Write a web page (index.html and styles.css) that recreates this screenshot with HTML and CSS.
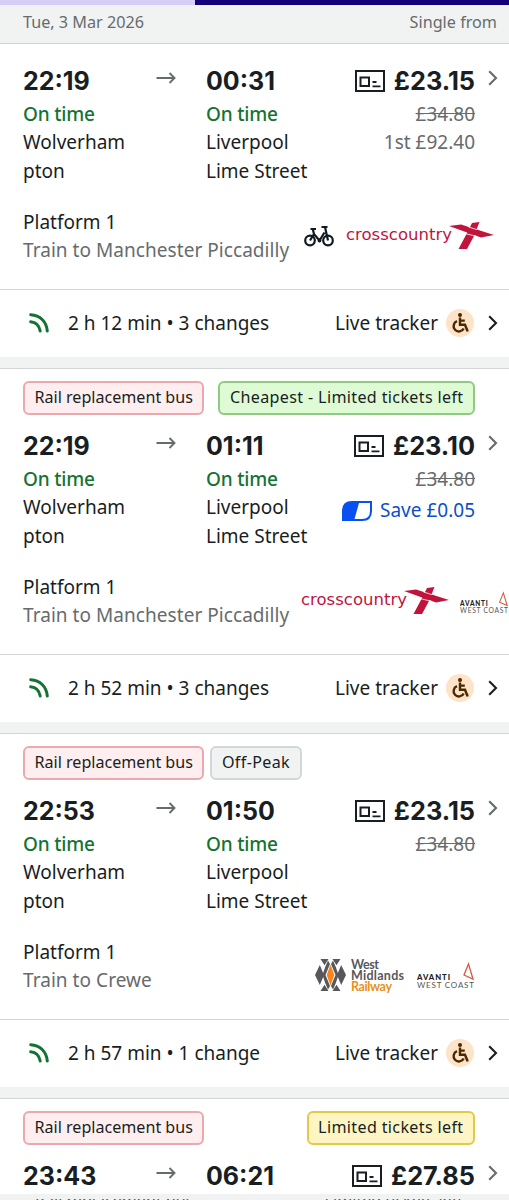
FILE: index.html
```html
<!DOCTYPE html>
<html lang="en">
<head>
  <meta charset="UTF-8">
  <meta name="viewport" content="width=device-width, initial-scale=1.0">
  <title>Train times</title>
  <link rel="stylesheet" href="styles.css">
</head>
<body>
  <!-- Shared icons and operator logos -->
  <svg class="sprite" width="0" height="0">
    <symbol id="arrow" viewBox="0 0 20 12">
      <path d="M.5 6h18M13.500 1l5 5-5 5" fill="none" stroke="currentColor" stroke-width="1.900"/>
    </symbol>
    <symbol id="chevron" viewBox="0 0 10 16">
      <path d="M1.200 1.200L8 8l-6.800 6.800" fill="none" stroke="currentColor" stroke-width="2.100"/>
    </symbol>
    <symbol id="ticket" viewBox="0 0 30 22">
      <path d="M1 1h28v20H1zM5.500 7.500h8.500v8.500H5.500z" fill="none" stroke="currentColor" stroke-width="2"/>
      <path d="M17.500 12h4M17.500 16.300h8" fill="none" stroke="currentColor" stroke-width="1.800"/>
    </symbol>
    <symbol id="live" viewBox="0 0 20 20">
      <path d="M1.700 1.700c9.300.5 15.800 7 16.600 16.300M1.700 8.800c5.300.5 8.500 3.700 9.500 9.200" fill="none" stroke="currentColor" stroke-width="3" stroke-linecap="round"/>
    </symbol>
    <symbol id="wheelchair" viewBox="0 0 28 28">
      <circle cx="14" cy="14" r="14" fill="#fde3c8"/>
      <circle cx="14" cy="6" r="2" fill="#4a2800"/>
      <path d="M14 8.500v7.300h5l2.200 5.500 1.200-.3M14 11.600h4.800M11 12.200a5.300 5.300 0 1 0 6.700 7.200" fill="none" stroke="#4a2800" stroke-width="2.400"/>
    </symbol>
    <symbol id="bike" viewBox="0 0 30 22">
      <g fill="none" stroke="#101820" stroke-width="2.200">
        <circle cx="6" cy="15.500" r="4.800"/>
        <circle cx="24" cy="15.500" r="4.800"/>
        <path d="M6 15.500l4-6.500 5.500 6.500 5-8M10 9L8.800 4.200M6.500 4h5.500M24 15.500L21 2h-3.500M21 2h2.500"/>
      </g>
      <circle cx="15.500" cy="15.500" r="1.900" fill="#101820"/>
    </symbol>
    <symbol id="crosscountry" viewBox="0 0 148 28">
      <text x="0" y="18" font-family="DejaVu Sans" font-size="16.500" textLength="106" lengthAdjust="spacingAndGlyphs" fill="#c0143c">crosscountry</text>
      <path d="M103 4l12-1.500 33 10.500-13 2.500z" fill="#c0143c"/>
      <path d="M126 1l7.500-1-6 15-6.500 12h-8.500l8-15z" fill="#c0143c"/>
      <path d="M122.500 5l8.500 2.600M118 11.300l12.500 3" stroke="#fff" stroke-width=".8"/>
    </symbol>
    <symbol id="wmr" viewBox="0 0 90 35">
      <path d="M5.500 0h8L9.500 6.300zM17.500 0h8l-4 6.300zM5.500 32h8l-4-6.300zM17.500 32h8l-4-6.300zM4.800 6L9 16 4.800 26 0 16zM26.200 6L31 16l-4.800 10L22 16z" fill="#57585c"/>
      <path d="M10.200 8L13 1.500l2 3.500-4.500 11L15 27l-2 3.500L10.200 24 7.500 16zM20.800 8L18 1.500 16 5l4.500 11L16 27l2 3.500 2.800-6.500 2.700-8z" fill="#57585c"/>
      <path d="M15.500 5.500l3.800 10.500-3.800 10.500-3.800-10.500z" fill="#f7851b"/>
      <g font-family="Lato" font-size="12.500" font-weight="700">
        <text x="36" y="9.500" textLength="28" fill="#57585c">West</text>
        <text x="36" y="21" textLength="53" fill="#57585c">Midlands</text>
        <text x="36" y="32" textLength="41" fill="#e8921c">Railway</text>
      </g>
    </symbol>
    <symbol id="avanti" viewBox="0 0 57 28">
      <path d="M51.500 2l-4.500 11 9 4z" fill="none" stroke="#d65a41" stroke-width="1.300"/>
      <text x="0" y="18" font-family="Lato" font-size="7.700" font-weight="900" textLength="33" fill="#222">AVANTI</text>
      <text x="0" y="26.300" font-family="Lato" font-size="8" textLength="57" fill="#555">WEST COAST</text>
    </symbol>
    <symbol id="saver" viewBox="0 0 30 20">
      <path d="M10 0h20v10q0 10-10 10H0V10Q0 0 10 0z" fill="#0850f0"/>
      <path d="M17 2H28v8q0 8-8 8h-7.500z" fill="#fff"/>
    </symbol>
  </svg>

  <div class="page">
    <div class="progress"><div class="progress-done"></div></div>
    <header class="date-bar">
      <span>Tue, 3 Mar 2026</span>
      <span>Single from</span>
    </header>

    <main>
      <section class="journey untagged">
        <div class="summary">
          <div class="stop">
            <div class="time">22:19</div>
            <div class="status">On time</div>
            <div>Wolverham<br>pton</div>
          </div>
          <svg class="arrow"><use href="#arrow"/></svg>
          <div class="stop">
            <div class="time">00:31</div>
            <div class="status">On time</div>
            <div>Liverpool<br>Lime Street</div>
          </div>
          <div class="fare">
            <div class="price"><svg class="ticket"><use href="#ticket"/></svg>£23.15</div>
            <div class="was">£34.80</div>
            <div class="first-class">1st £92.40</div>
          </div>
          <svg class="chevron"><use href="#chevron"/></svg>
        </div>
        <div class="service">
          <div>
            <div>Platform 1</div>
            <div class="train">Train to Manchester Piccadilly</div>
          </div>
          <div class="operators">
            <svg class="bike"><use href="#bike"/></svg>
            <svg class="crosscountry"><use href="#crosscountry"/></svg>
          </div>
        </div>
        <div class="tracker">
          <svg class="live"><use href="#live"/></svg>
          <span>2 h 12 min • 3 changes</span>
          <span class="track-link">Live tracker</span>
          <svg class="wheelchair"><use href="#wheelchair"/></svg>
          <svg class="chevron"><use href="#chevron"/></svg>
        </div>
      </section>

      <section class="journey">
        <div class="tags">
          <span class="tag tag-red">Rail replacement bus</span>
          <span class="tag tag-green tag-right">Cheapest - Limited tickets left</span>
        </div>
        <div class="summary">
          <div class="stop">
            <div class="time">22:19</div>
            <div class="status">On time</div>
            <div>Wolverham<br>pton</div>
          </div>
          <svg class="arrow"><use href="#arrow"/></svg>
          <div class="stop">
            <div class="time">01:11</div>
            <div class="status">On time</div>
            <div>Liverpool<br>Lime Street</div>
          </div>
          <div class="fare">
            <div class="price"><svg class="ticket"><use href="#ticket"/></svg>£23.10</div>
            <div class="was">£34.80</div>
            <div class="saving"><svg class="saver"><use href="#saver"/></svg>Save £0.05</div>
          </div>
          <svg class="chevron"><use href="#chevron"/></svg>
        </div>
        <div class="service">
          <div>
            <div>Platform 1</div>
            <div class="train">Train to Manchester Piccadilly</div>
          </div>
          <div class="operators">
            <svg class="crosscountry"><use href="#crosscountry"/></svg>
            <svg class="avanti avanti-small" viewBox="0 0 57 28"><use href="#avanti" width="57" height="28"/></svg>
          </div>
        </div>
        <div class="tracker">
          <svg class="live"><use href="#live"/></svg>
          <span>2 h 52 min • 3 changes</span>
          <span class="track-link">Live tracker</span>
          <svg class="wheelchair"><use href="#wheelchair"/></svg>
          <svg class="chevron"><use href="#chevron"/></svg>
        </div>
      </section>

      <section class="journey">
        <div class="tags">
          <span class="tag tag-red">Rail replacement bus</span>
          <span class="tag tag-grey">Off-Peak</span>
        </div>
        <div class="summary">
          <div class="stop">
            <div class="time">22:53</div>
            <div class="status">On time</div>
            <div>Wolverham<br>pton</div>
          </div>
          <svg class="arrow"><use href="#arrow"/></svg>
          <div class="stop">
            <div class="time">01:50</div>
            <div class="status">On time</div>
            <div>Liverpool<br>Lime Street</div>
          </div>
          <div class="fare">
            <div class="price"><svg class="ticket"><use href="#ticket"/></svg>£23.15</div>
            <div class="was">£34.80</div>
          </div>
          <svg class="chevron"><use href="#chevron"/></svg>
        </div>
        <div class="service">
          <div>
            <div>Platform 1</div>
            <div class="train">Train to Crewe</div>
          </div>
          <div class="operators operators-right">
            <svg class="wmr"><use href="#wmr"/></svg>
            <svg class="avanti"><use href="#avanti"/></svg>
          </div>
        </div>
        <div class="tracker">
          <svg class="live"><use href="#live"/></svg>
          <span>2 h 57 min • 1 change</span>
          <span class="track-link">Live tracker</span>
          <svg class="wheelchair"><use href="#wheelchair"/></svg>
          <svg class="chevron"><use href="#chevron"/></svg>
        </div>
      </section>

      <section class="journey">
        <div class="tags">
          <span class="tag tag-red">Rail replacement bus</span>
          <span class="tag tag-yellow tag-right">Limited tickets left</span>
        </div>
        <div class="summary">
          <div class="stop"><div class="time">23:43</div></div>
          <svg class="arrow"><use href="#arrow"/></svg>
          <div class="stop"><div class="time">06:21</div></div>
          <div class="fare">
            <div class="price"><svg class="ticket"><use href="#ticket"/></svg>£27.85</div>
          </div>
          <svg class="chevron"><use href="#chevron"/></svg>
        </div>
      </section>
    </main>

    <!-- Bottom edge with the next row just showing -->
    <footer class="peek">
      <div class="peek-row">
        <span>Rail replacement bus</span>
        <span>Limited tickets left</span>
      </div>
    </footer>
  </div>
</body>
</html>
```

FILE: styles.css
```css
* {
  box-sizing: border-box;
}
body {
  margin: 0;
  font-family: "Noto Sans", sans-serif;
  font-size: 19px;
  line-height: 28.4px;
  color: #181e22;
  background: #fff;
}
svg {
  display: block;
  flex-shrink: 0;
}
.sprite {
  display: none;
}
.page {
  display: flex;
  flex-direction: column;
  height: 1200px;
  overflow: hidden;
}
main {
  flex: 1;
  min-height: 0;
  overflow: hidden;
}

/* Header */
.progress {
  height: 5px;
  background: #d7cdf7;
  flex-shrink: 0;
}
.progress-done {
  height: 5px;
  margin-left: 195px;
  background: #16007a;
}
.date-bar {
  display: flex;
  justify-content: space-between;
  height: 39px;
  padding: 3px 12px 0 23px;
  border-bottom: 1px solid #cfd3d3;
  background: #f1f3f3;
  color: #666b6e;
  font-size: 16.2px;
  flex-shrink: 0;
}

/* Journey card */
.journey {
  padding-top: 12px;
  border-bottom: 1px solid #d2d4d5;
}
.journey.untagged {
  padding-top: 18px;
}
.tags {
  display: flex;
  gap: 6px;
  padding: 0 34px 0 23px;
  margin-bottom: 12px;
}
.tag {
  height: 34px;
  padding: 0 9.5px;
  border: 2px solid;
  border-radius: 6px;
  font-size: 16.1px;
  line-height: 29px;
  letter-spacing: 0.35px;
  white-space: nowrap;
}
.tag-right {
  margin-left: auto;
}
.tag-red {
  background: #ffeeef;
  border-color: #eba9ae;
  letter-spacing: 0;
}
.tag-green {
  background: #dffbd6;
  border-color: #8dcb83;
}
.tag-grey {
  background: #f1f3f3;
  border-color: #d2d6d6;
}
.tag-yellow {
  background: #fdf6c4;
  border-color: #e5c845;
}
.summary {
  display: flex;
  height: 123.2px;
  padding: 0 12px 0 23px;
}
.stop {
  width: 133px;
  white-space: nowrap;
}
.stop + .fare {
  flex: 1;
}
.arrow {
  width: 20px;
  height: 12px;
  margin: 10px 30px 0 0;
  color: #666b6e;
}
.time,
.price {
  font-family: Inter, sans-serif;
  font-size: 25px;
  font-weight: 700;
  line-height: 38px;
}
.price {
  font-size: 25.3px;
}
.status {
  color: #147332;
  font-weight: 500;
  letter-spacing: -0.2px;
}
.fare {
  text-align: right;
  white-space: nowrap;
}
.price {
  display: flex;
  justify-content: flex-end;
  align-items: center;
}
.ticket {
  width: 30px;
  height: 22px;
  margin-right: 9px;
}
.was,
.first-class,
.train {
  color: #666b6e;
}
.train {
  letter-spacing: 0.05px;
}
.was {
  text-decoration: line-through;
}
.saving {
  display: flex;
  justify-content: flex-end;
  align-items: center;
  padding-top: 3px;
  color: #0c4fc8;
}
.saver {
  width: 30px;
  height: 20px;
  margin-right: 8px;
}
.chevron {
  width: 10px;
  height: 16px;
  margin-left: 12px;
}
.summary .chevron {
  margin: 8px -1px 0 13px;
  color: #666b6e;
}

/* Platform and operators */
.service {
  display: flex;
  align-items: center;
  margin-top: 22.5px;
  padding: 0 35px 24px 23px;
  border-bottom: 1px solid #d2d4d5;
  white-space: nowrap;
  overflow: hidden;
}
.operators {
  display: flex;
  align-items: center;
  gap: 12px;
  margin-left: 11.5px;
}
.operators-right {
  margin: 20px 0 0 auto;
}
.bike {
  width: 30px;
  height: 22px;
  margin-left: 3px;
}
.crosscountry {
  width: 148px;
  height: 28px;
}
.wmr {
  width: 90px;
  height: 35px;
}
.avanti {
  width: 57px;
  height: 28px;
}
.avanti-small {
  width: 48px;
  height: 24px;
  margin: 3px 0 0 -1px;
}

/* Live tracker row */
.tracker {
  display: flex;
  align-items: center;
  height: 78.5px;
  padding: 0 11px 0 29px;
  border-bottom: 11px solid #f1f2f2;
}
.live {
  width: 20px;
  height: 20px;
  margin-right: 19px;
  color: #147332;
}
.track-link {
  margin-left: auto;
}
.wheelchair {
  width: 28px;
  height: 28px;
  margin: 0 2px 0 8px;
}

/* Bottom edge */
.peek {
  height: 6px;
  padding-top: 4.5px;
  background: #f1f2f2;
  flex-shrink: 0;
}
.peek-row {
  display: flex;
  justify-content: space-between;
  height: 1.5px;
  padding: 0 46px 0 35px;
  overflow: hidden;
  color: #55595c;
  font-size: 16.1px;
  line-height: 2px;
}
```
